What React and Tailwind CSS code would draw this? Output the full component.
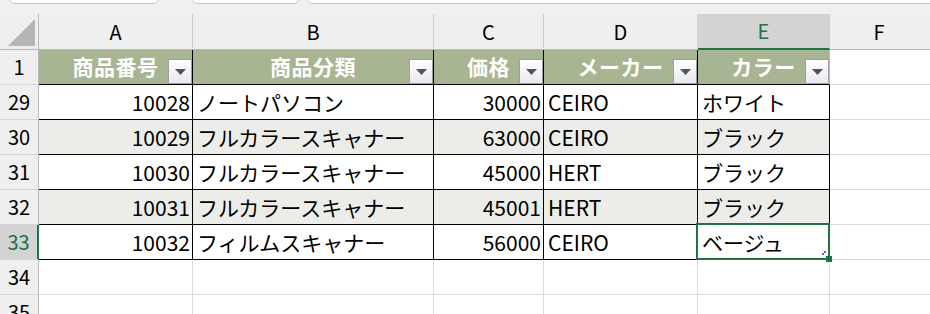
import React from "react";

const rows = [
  { n: 29, id: "10028", cat: "ノートパソコン", price: "30000", maker: "CEIRO", color: "ホワイト" },
  { n: 30, id: "10029", cat: "フルカラースキャナー", price: "63000", maker: "CEIRO", color: "ブラック" },
  { n: 31, id: "10030", cat: "フルカラースキャナー", price: "45000", maker: "HERT", color: "ブラック" },
  { n: 32, id: "10031", cat: "フルカラースキャナー", price: "45001", maker: "HERT", color: "ブラック" },
  { n: 33, id: "10032", cat: "フィルムスキャナー", price: "56000", maker: "CEIRO", color: "ベージュ" },
];

const headers = ["商品番号", "商品分類", "価格", "メーカー", "カラー"];

function FilterButton() {
  return (
    <div className="absolute right-0 bottom-0 w-[24px] h-[25px] border border-[#a0a0a0] bg-gradient-to-b from-white to-[#e6e9f0] flex items-center justify-center">
      <svg width="11" height="6" viewBox="0 0 11 6">
        <path d="M0 0 H11 L5.5 6 Z" fill="#555" />
      </svg>
    </div>
  );
}

export default function App() {
  const font = { fontFamily: '"Noto Sans CJK JP", "Noto Sans", sans-serif' };
  return (
    <div className="w-[930px] h-[314px] overflow-hidden bg-white text-black" style={font}>
      {/* strip above the sheet */}
      <div className="relative h-[14px] bg-[#f0f0f0]">
        <div className="absolute left-[9px] -top-[4px] w-[150px] h-[8px] bg-white border border-[#c6c6c6] rounded-b-[5px]" />
        <div className="absolute left-[192px] -top-[4px] w-[107px] h-[8px] bg-white border border-[#c6c6c6] rounded-b-[5px]" />
        <div className="absolute left-[307px] -top-[4px] w-[640px] h-[8px] bg-white border border-[#c6c6c6] rounded-bl-[5px]" />
      </div>

      <div className="grid grid-cols-[39px_154px_241px_110px_154px_132px_1fr] grid-rows-[36px] auto-rows-[35px] text-[21px] leading-none">
        {/* column letters */}
        <div className="relative bg-[#efefef] border-r border-b border-[#bababa]">
          <svg className="absolute left-[7px] bottom-[2px]" width="29" height="29" viewBox="0 0 29 29">
            <path d="M28 1 V28 H1 Z" fill="#b5b5b5" />
          </svg>
        </div>
        {["A", "B", "C", "D"].map((c) => (
          <div key={c} className="bg-[#efefef] border-r border-r-[#d0d0d0] border-b border-b-[#bababa] flex items-center justify-center text-[20px]">
            {c}
          </div>
        ))}
        <div className="bg-[#d3d3d3] border-r border-r-[#d0d0d0] border-b-2 border-b-[#217346] flex items-center justify-center text-[20px] text-[#217346]">
          E
        </div>
        <div className="bg-[#efefef] border-b border-b-[#bababa] flex items-center justify-center text-[20px] pr-[2px]">
          F
        </div>

        {/* row 1: table header */}
        <div className="bg-[#efefef] border-r border-r-[#bababa] border-b border-b-[#d4d4d4] flex items-center justify-center text-[20px]">
          1
        </div>
        {headers.map((h, i) => (
          <div
            key={h}
            className={
              "relative bg-[#a7b592] border-b border-b-black border-r flex items-center justify-center font-bold text-white text-[21px] " +
              (i === 4 ? "border-r-[#bdbdbd]" : "border-r-black")
            }
          >
            <span className="tracking-[0.5px] mt-[-1px]">{h}</span>
            <FilterButton />
          </div>
        ))}
        <div className="border-b border-b-[#dadada]" />

        {/* data rows */}
        {rows.map((r, i) => {
          const stripe = i % 2 === 1 ? "bg-[#ecede8]" : "bg-white";
          const sel = r.n === 33;
          const cell = "border-r border-b border-black flex items-center " + stripe;
          return (
            <React.Fragment key={r.n}>
              <div
                className={
                  "border-b border-b-[#d4d4d4] flex items-center justify-center text-[20px] " +
                  (sel
                    ? "bg-[#d3d3d3] text-[#217346] border-r-2 border-r-[#217346]"
                    : "bg-[#efefef] border-r border-r-[#bababa]")
                }
              >
                {r.n}
              </div>
              <div className={cell + " justify-end pr-[2px]"}>{r.id}</div>
              <div className={cell + " pl-[4px] whitespace-nowrap"}>{r.cat}</div>
              <div className={cell + " justify-end pr-[2px]"}>{r.price}</div>
              <div className={cell + " pl-[4px]"}>{r.maker}</div>
              <div className={"relative " + cell + " pl-[4px] whitespace-nowrap"}>
                {r.color}
                {sel && (
                  <>
                    <div className="absolute -left-[2px] -top-[2px] -right-[1px] -bottom-[1px] border-2 border-[#217346]" />
                    <div className="absolute -right-[3px] -bottom-[3px] w-[6px] h-[6px] bg-[#217346]" />
                    <div className="absolute right-[5px] bottom-[4px] w-[2px] h-[2px] bg-[#4d6bd1]" />
                    <div className="absolute right-[3px] bottom-[6px] w-[2px] h-[2px] bg-[#4d6bd1]" />
                  </>
                )}
              </div>
              <div className="border-b border-b-[#dadada]" />
            </React.Fragment>
          );
        })}

        {/* empty rows */}
        {[34, 35].map((n) => (
          <React.Fragment key={n}>
            <div className="bg-[#efefef] border-r border-r-[#bababa] border-b border-b-[#d4d4d4] flex items-center justify-center text-[20px]">
              {n}
            </div>
            {[0, 1, 2, 3, 4].map((c) => (
              <div key={c} className="border-r border-b border-[#dadada]" />
            ))}
            <div className="border-b border-b-[#dadada]" />
          </React.Fragment>
        ))}
      </div>
    </div>
  );
}
